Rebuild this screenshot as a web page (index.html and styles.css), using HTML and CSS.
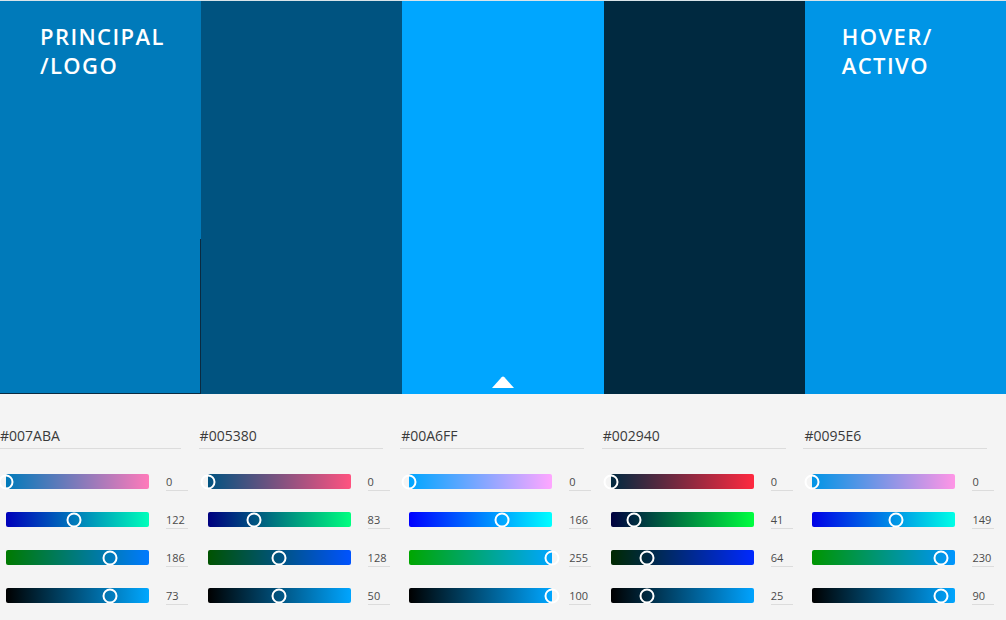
FILE: index.html
```html
<!DOCTYPE html>
<html lang="es">
<head>
<meta charset="utf-8">
<title>Paleta</title>
<link rel="stylesheet" href="styles.css">
</head>
<body>
<div class="page">
  <div class="swatches">
    <div class="swatch swatch-split">
      <div class="split-top c1"><div class="label">PRINCIPAL<br>/LOGO</div></div>
      <div class="split-bottom c1"></div>
    </div>
    <div class="swatch c2"></div>
    <div class="swatch c3 selected">
      <svg class="caret" width="22" height="12" viewBox="0 0 22 12"><path d="M0 12 L9.6 1.2 Q11 0 12.4 1.2 L22 12 Z" fill="#fff"/></svg>
    </div>
    <div class="swatch c4"></div>
    <div class="swatch c5"><div class="label label-right">HOVER/<br>ACTIVO</div></div>
  </div>

  <div class="panels">
    <div class="panel">
      <div class="hex">#007ABA</div>
      <div class="row"><div class="track" style="background:linear-gradient(90deg,rgb(0,122,186),rgb(255,122,186))"><span class="thumb" style="left:0%"></span></div><div class="val">0</div></div>
      <div class="row"><div class="track" style="background:linear-gradient(90deg,rgb(0,0,186),rgb(0,255,186))"><span class="thumb" style="left:47.84%"></span></div><div class="val">122</div></div>
      <div class="row"><div class="track" style="background:linear-gradient(90deg,rgb(0,122,0),rgb(0,122,255))"><span class="thumb" style="left:72.94%"></span></div><div class="val">186</div></div>
      <div class="row"><div class="track" style="background:linear-gradient(90deg,#000,rgb(0,167,255))"><span class="thumb" style="left:73%"></span></div><div class="val">73</div></div>
    </div>
    <div class="panel">
      <div class="hex">#005380</div>
      <div class="row"><div class="track" style="background:linear-gradient(90deg,rgb(0,83,128),rgb(255,83,128))"><span class="thumb" style="left:0%"></span></div><div class="val">0</div></div>
      <div class="row"><div class="track" style="background:linear-gradient(90deg,rgb(0,0,128),rgb(0,255,128))"><span class="thumb" style="left:32.55%"></span></div><div class="val">83</div></div>
      <div class="row"><div class="track" style="background:linear-gradient(90deg,rgb(0,83,0),rgb(0,83,255))"><span class="thumb" style="left:50.2%"></span></div><div class="val">128</div></div>
      <div class="row"><div class="track" style="background:linear-gradient(90deg,#000,rgb(0,165,255))"><span class="thumb" style="left:50%"></span></div><div class="val">50</div></div>
    </div>
    <div class="panel">
      <div class="hex">#00A6FF</div>
      <div class="row"><div class="track" style="background:linear-gradient(90deg,rgb(0,166,255),rgb(255,166,255))"><span class="thumb" style="left:0%"></span></div><div class="val">0</div></div>
      <div class="row"><div class="track" style="background:linear-gradient(90deg,rgb(0,0,255),rgb(0,255,255))"><span class="thumb" style="left:65.1%"></span></div><div class="val">166</div></div>
      <div class="row"><div class="track" style="background:linear-gradient(90deg,rgb(0,166,0),rgb(0,166,255))"><span class="thumb" style="left:100%"></span></div><div class="val">255</div></div>
      <div class="row"><div class="track" style="background:linear-gradient(90deg,#000,rgb(0,166,255))"><span class="thumb" style="left:100%"></span></div><div class="val">100</div></div>
    </div>
    <div class="panel">
      <div class="hex">#002940</div>
      <div class="row"><div class="track" style="background:linear-gradient(90deg,rgb(0,41,64),rgb(255,41,64))"><span class="thumb" style="left:0%"></span></div><div class="val">0</div></div>
      <div class="row"><div class="track" style="background:linear-gradient(90deg,rgb(0,0,64),rgb(0,255,64))"><span class="thumb" style="left:16.08%"></span></div><div class="val">41</div></div>
      <div class="row"><div class="track" style="background:linear-gradient(90deg,rgb(0,41,0),rgb(0,41,255))"><span class="thumb" style="left:25.1%"></span></div><div class="val">64</div></div>
      <div class="row"><div class="track" style="background:linear-gradient(90deg,#000,rgb(0,163,255))"><span class="thumb" style="left:25%"></span></div><div class="val">25</div></div>
    </div>
    <div class="panel">
      <div class="hex">#0095E6</div>
      <div class="row"><div class="track" style="background:linear-gradient(90deg,rgb(0,149,230),rgb(255,149,230))"><span class="thumb" style="left:0%"></span></div><div class="val">0</div></div>
      <div class="row"><div class="track" style="background:linear-gradient(90deg,rgb(0,0,230),rgb(0,255,230))"><span class="thumb" style="left:58.43%"></span></div><div class="val">149</div></div>
      <div class="row"><div class="track" style="background:linear-gradient(90deg,rgb(0,149,0),rgb(0,149,255))"><span class="thumb" style="left:90.2%"></span></div><div class="val">230</div></div>
      <div class="row"><div class="track" style="background:linear-gradient(90deg,#000,rgb(0,165,255))"><span class="thumb" style="left:90%"></span></div><div class="val">90</div></div>
    </div>
  </div>
</div>
</body>
</html>
```

FILE: styles.css
```css
html, body {
  margin: 0;
  padding: 0;
}
body {
  background: #f4f4f4;
  font-family: "Open Sans", "Noto Sans", sans-serif;
  overflow: hidden;
}
.page {
  width: 1006px;
  height: 620px;
  overflow: hidden;
}
.swatches {
  display: flex;
  height: 393px;
  border-top: 1px solid #d9e4ea;
}
.swatch {
  flex: 1 1 0;
  position: relative;
}
.swatch-split {
  display: flex;
  flex-direction: column;
}
.split-top {
  height: 238px;
}
.split-bottom {
  flex: 1;
  border-right: 1px solid #0b2a40;
  border-bottom: 1px solid #0b2a40;
}
.c1 { background: #007aba; }
.c2 { background: #005380; }
.c3 { background: #00a6ff; }
.c4 { background: #002940; }
.c5 { background: #0095e6; }

.label {
  color: #fff;
  font-size: 22px;
  font-weight: 600;
  line-height: 29px;
  letter-spacing: 1.4px;
  padding: 21px 0 0 40px;
}
.label-right {
  padding-left: 37px;
}
.caret {
  position: absolute;
  left: 50%;
  bottom: 6px;
  margin-left: -11px;
  display: block;
}

.panels {
  display: grid;
  grid-template-columns: repeat(5, 201.6px);
  margin-left: -3px;
  padding-top: 32px;
}
.panel {
  display: flex;
  flex-direction: column;
}
.hex {
  width: 183px;
  height: 22px;
  padding-left: 1px;
  border-bottom: 1px solid #dcdcdc;
  font-size: 14px;
  line-height: 20px;
  color: #3a3a3a;
}
.panel:first-child .hex {
  width: 181px;
  padding-left: 3px;
}
.hex + .row {
  margin-top: 25px;
}
.row {
  display: flex;
  align-items: flex-start;
  height: 38px;
}
.track {
  position: relative;
  margin-left: 9px;
  width: 143px;
  height: 15px;
  border-radius: 2px;
}
.thumb {
  position: absolute;
  top: 50%;
  width: 11px;
  height: 11px;
  border: 2px solid #fff;
  border-radius: 50%;
  transform: translate(-50%, -50%);
}
.val {
  margin-left: 17px;
  width: 22px;
  height: 16px;
  border-bottom: 1px solid #dcdcdc;
  font-size: 11px;
  line-height: 16px;
  color: #4a4a4a;
}
```
